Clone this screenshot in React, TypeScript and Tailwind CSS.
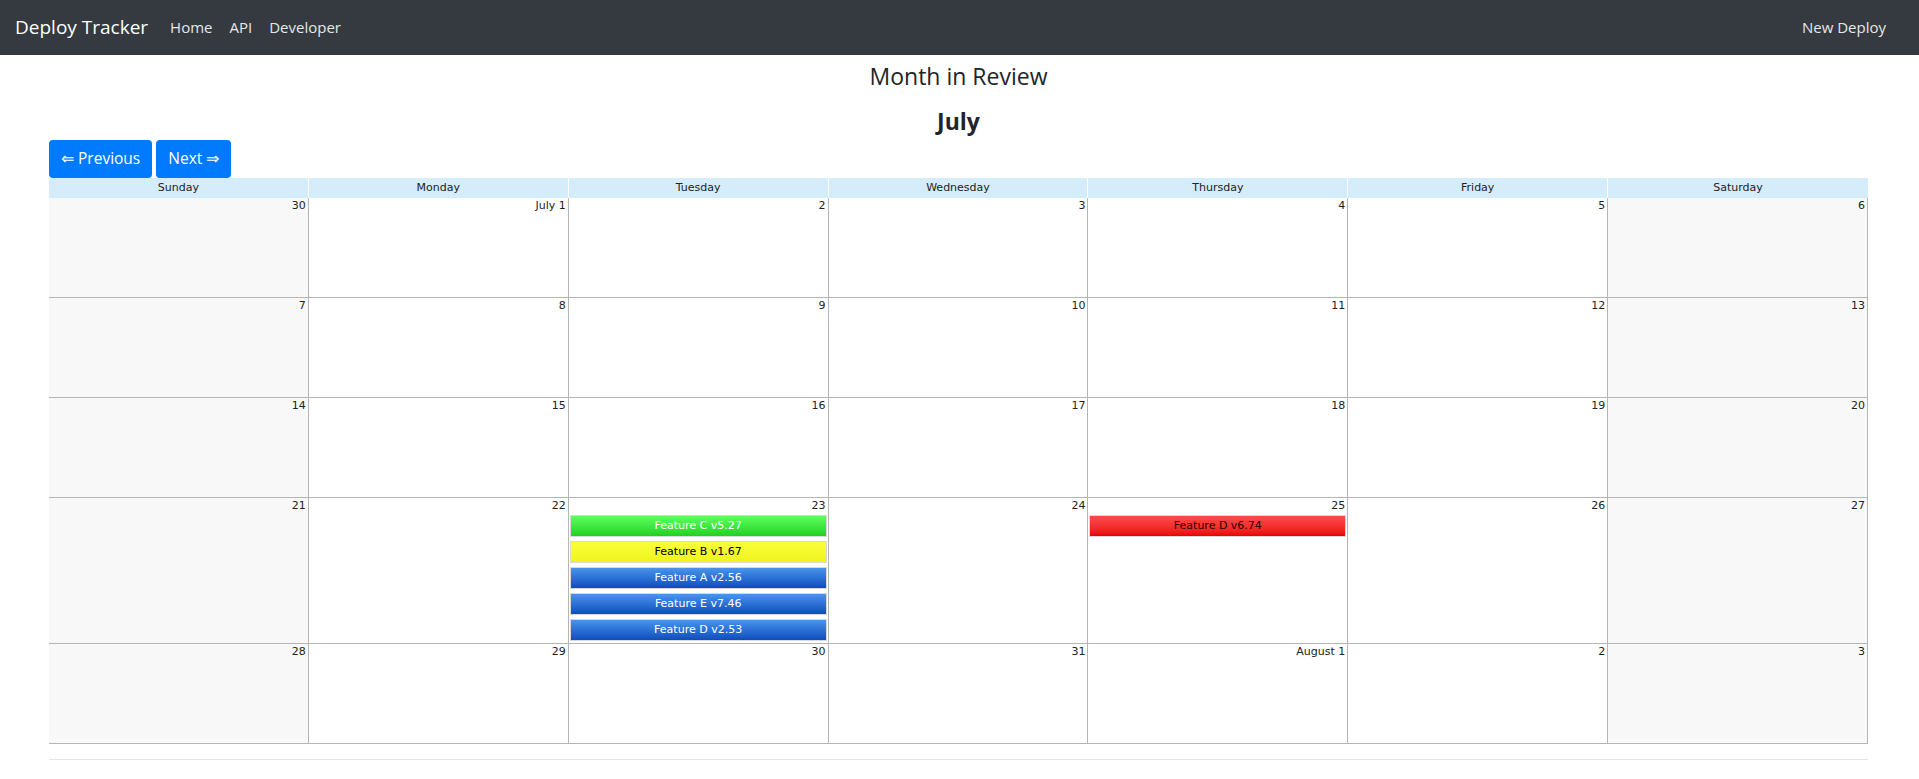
type Deploy = { name: string; kind: "green" | "yellow" | "blue" | "red" };

const kindClass: Record<Deploy["kind"], string> = {
  green: "bg-gradient-to-b from-[#5cff5c] to-[#1fd11f] text-white",
  yellow: "bg-gradient-to-b from-[#fbff3a] to-[#eef51c] text-black",
  blue: "bg-gradient-to-b from-[#4a94ec] to-[#0f4cbd] text-white",
  red: "bg-gradient-to-b from-[#ff4a4a] to-[#e80000] text-[#2a0000]",
};

const weekDays = ["Sunday", "Monday", "Tuesday", "Wednesday", "Thursday", "Friday", "Saturday"];

const weeks: string[][] = [
  ["30", "July 1", "2", "3", "4", "5", "6"],
  ["7", "8", "9", "10", "11", "12", "13"],
  ["14", "15", "16", "17", "18", "19", "20"],
  ["21", "22", "23", "24", "25", "26", "27"],
  ["28", "29", "30", "31", "August 1", "2", "3"],
];

// keyed by "week-weekday"
const deploys: Record<string, Deploy[]> = {
  "3-2": [
    { name: "Feature C v5.27", kind: "green" },
    { name: "Feature B v1.67", kind: "yellow" },
    { name: "Feature A v2.56", kind: "blue" },
    { name: "Feature E v7.46", kind: "blue" },
    { name: "Feature D v2.53", kind: "blue" },
  ],
  "3-4": [{ name: "Feature D v6.74", kind: "red" }],
};

function Navbar() {
  return (
    <nav className="h-[55px] bg-[#343a40] flex items-center px-[15px] font-['Open_Sans',sans-serif]">
      <span className="text-white text-[19px] mr-[22px]">Deploy Tracker</span>
      <div className="flex gap-[17px] text-[15px] text-[#e6e7e8]">
        <a>Home</a>
        <a>API</a>
        <a>Developer</a>
      </div>
      <a className="ml-auto mr-[18px] text-[15px] text-[#e6e7e8]">New Deploy</a>
    </nav>
  );
}

function DayCell({ day, weekend, items }: { day: string; weekend: boolean; items: Deploy[] }) {
  return (
    <div className={`border-r border-b border-[#b5b5b5] min-h-[100px] pb-[2px] ${weekend ? "bg-[#f8f8f8]" : "bg-white"}`}>
      <div className="h-[17px] text-right pr-[2px] text-[11px] leading-[16px] text-[#222]">{day}</div>
      <div className="flex flex-col gap-[4px] px-[1px]">
        {items.map((d) => (
          <div
            key={d.name}
            className={`h-[22px] border border-[#d8d8d8] flex items-center justify-center text-[11px] ${kindClass[d.kind]}`}
          >
            {d.name}
          </div>
        ))}
      </div>
    </div>
  );
}

function Calendar() {
  return (
    <div className="font-['DejaVu_Sans',sans-serif]">
      <div className="grid grid-cols-7 bg-[#d5ecfb] h-[20px] text-[11px] leading-[20px] text-[#222]">
        {weekDays.map((d) => (
          <div key={d} className="text-center border-r border-white last:border-r-0">
            {d}
          </div>
        ))}
      </div>
      {weeks.map((week, w) => (
        <div key={w} className="grid grid-cols-7">
          {week.map((day, i) => (
            <DayCell key={i} day={day} weekend={i === 0 || i === 6} items={deploys[`${w}-${i}`] ?? []} />
          ))}
        </div>
      ))}
    </div>
  );
}

export default function App() {
  return (
    <div className="min-h-[779px] bg-white text-[#212529]">
      <Navbar />
      <main className="pl-[49px] pr-[51px] pb-[20px]">
        <h3 className="text-center text-[23px] font-['Open_Sans',sans-serif] leading-[32px] pt-[5px]">Month in Review</h3>
        <h2 className="text-center text-[23px] font-bold font-['Open_Sans',sans-serif] leading-[32px] mt-[13px]">July</h2>
        <div className="flex gap-[4px] mt-[3px] font-['Open_Sans',sans-serif]">
          <button className="h-[38px] px-[12px] bg-[#007bff] text-white text-[15.5px] rounded-[4px]">⇐ Previous</button>
          <button className="h-[38px] px-[12px] bg-[#007bff] text-white text-[15.5px] rounded-[4px]">Next ⇒</button>
        </div>
        <Calendar />
        <div className="border-t border-[#e5e5e5] mt-[15px]" />
      </main>
    </div>
  );
}
